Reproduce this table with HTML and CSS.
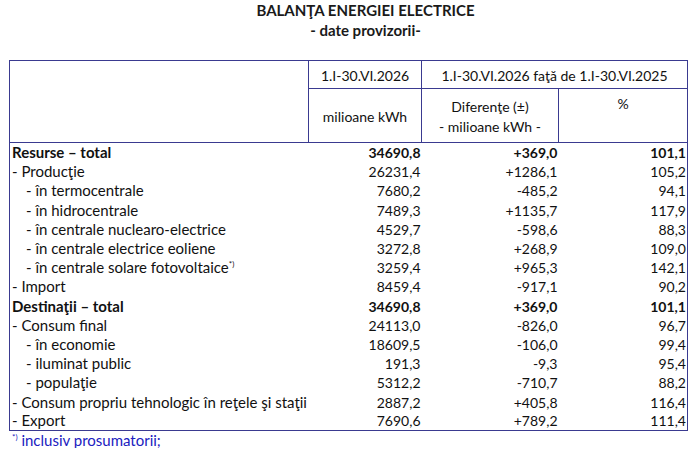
FILE: index.html
```html
<!DOCTYPE html>
<html lang="ro">
<head>
<meta charset="utf-8">
<link rel="stylesheet" href="styles.css">
</head>
<body>
<div class="title">
  <div>BALANŢA ENERGIEI ELECTRICE</div>
  <div>- date provizorii-</div>
</div>
<table class="bal">
  <colgroup>
    <col class="c1"><col class="c2"><col class="c3"><col class="c4">
  </colgroup>
  <thead>
    <tr class="h1">
      <th rowspan="2" class="blank"></th>
      <th>1.I-30.VI.2026</th>
      <th colspan="2">1.I-30.VI.2026 faţă de 1.I-30.VI.2025</th>
    </tr>
    <tr class="h2">
      <th>milioane kWh</th>
      <th>Diferenţe (±)<br>- milioane kWh -</th>
      <th class="top">%</th>
    </tr>
  </thead>
  <tbody>
    <tr class="b"><td>Resurse – total</td><td>34690,8</td><td>+369,0</td><td>101,1</td></tr>
    <tr><td>- Producţie</td><td>26231,4</td><td>+1286,1</td><td>105,2</td></tr>
    <tr><td class="ind">- în termocentrale</td><td>7680,2</td><td>-485,2</td><td>94,1</td></tr>
    <tr><td class="ind">- în hidrocentrale</td><td>7489,3</td><td>+1135,7</td><td>117,9</td></tr>
    <tr><td class="ind">- în centrale nuclearo-electrice</td><td>4529,7</td><td>-598,6</td><td>88,3</td></tr>
    <tr><td class="ind">- în centrale electrice eoliene</td><td>3272,8</td><td>+268,9</td><td>109,0</td></tr>
    <tr><td class="ind">- în centrale solare fotovoltaice<sup>*)</sup></td><td>3259,4</td><td>+965,3</td><td>142,1</td></tr>
    <tr><td>- Import</td><td>8459,4</td><td>-917,1</td><td>90,2</td></tr>
    <tr class="b"><td>Destinaţii – total</td><td>34690,8</td><td>+369,0</td><td>101,1</td></tr>
    <tr><td>- Consum final</td><td>24113,0</td><td>-826,0</td><td>96,7</td></tr>
    <tr><td class="ind">- în economie</td><td>18609,5</td><td>-106,0</td><td>99,4</td></tr>
    <tr><td class="ind">- iluminat public</td><td>191,3</td><td>-9,3</td><td>95,4</td></tr>
    <tr><td class="ind">- populaţie</td><td>5312,2</td><td>-710,7</td><td>88,2</td></tr>
    <tr><td>- Consum propriu tehnologic în reţele şi staţii</td><td>2887,2</td><td>+405,8</td><td>116,4</td></tr>
    <tr><td>- Export</td><td>7690,6</td><td>+789,2</td><td>111,4</td></tr>
  </tbody>
</table>
<div class="note"><sup>*)</sup> inclusiv prosumatorii;</div>
</body>
</html>
```
FILE: styles.css
```css
html, body {
  margin: 0;
  padding: 0;
  background: #ffffff;
}
body {
  font-family: Lato, "Open Sans", sans-serif;
  font-size: 14px;
  color: #111111;
}
.title {
  padding: 0 0 0 31px;
  text-align: center;
  font-weight: bold;
  font-size: 15px;
  line-height: 20px;
  color: #1a1a1a;
}
.bal {
  margin: 20px 0 0 9px;
  border-collapse: collapse;
  table-layout: fixed;
  width: 678px;
  border: 1px solid #3a3a90;
}
.c1 { width: 299px; }
.c2 { width: 113px; }
.c3 { width: 137px; }
.c4 { width: 129px; }
.bal th {
  font-weight: normal;
  border: 1px solid #3a3a90;
  padding: 2px 0 0 0;
  text-align: center;
  line-height: 20px;
}
.h1 { height: 28px; }
.h2 { height: 54px; }
.h2 th { padding-top: 3px; }
.bal th.top { vertical-align: top; padding-top: 5px; }
.bal tbody tr { height: 19.2px; }
.bal td {
  padding: 1px 1px 0 0;
  line-height: 17px;
  text-align: right;
  white-space: nowrap;
}
.bal td:first-child {
  text-align: left;
  padding-left: 2px;
  font-size: 15px;
}
.bal td.ind { padding-left: 16px; }
.b td { font-weight: bold; }
sup {
  font-size: 8px;
  line-height: 0;
  vertical-align: 6px;
}
.note {
  padding: 2px 0 0 12px;
  color: #2020c0;
  font-size: 15px;
  line-height: 15px;
}
```
